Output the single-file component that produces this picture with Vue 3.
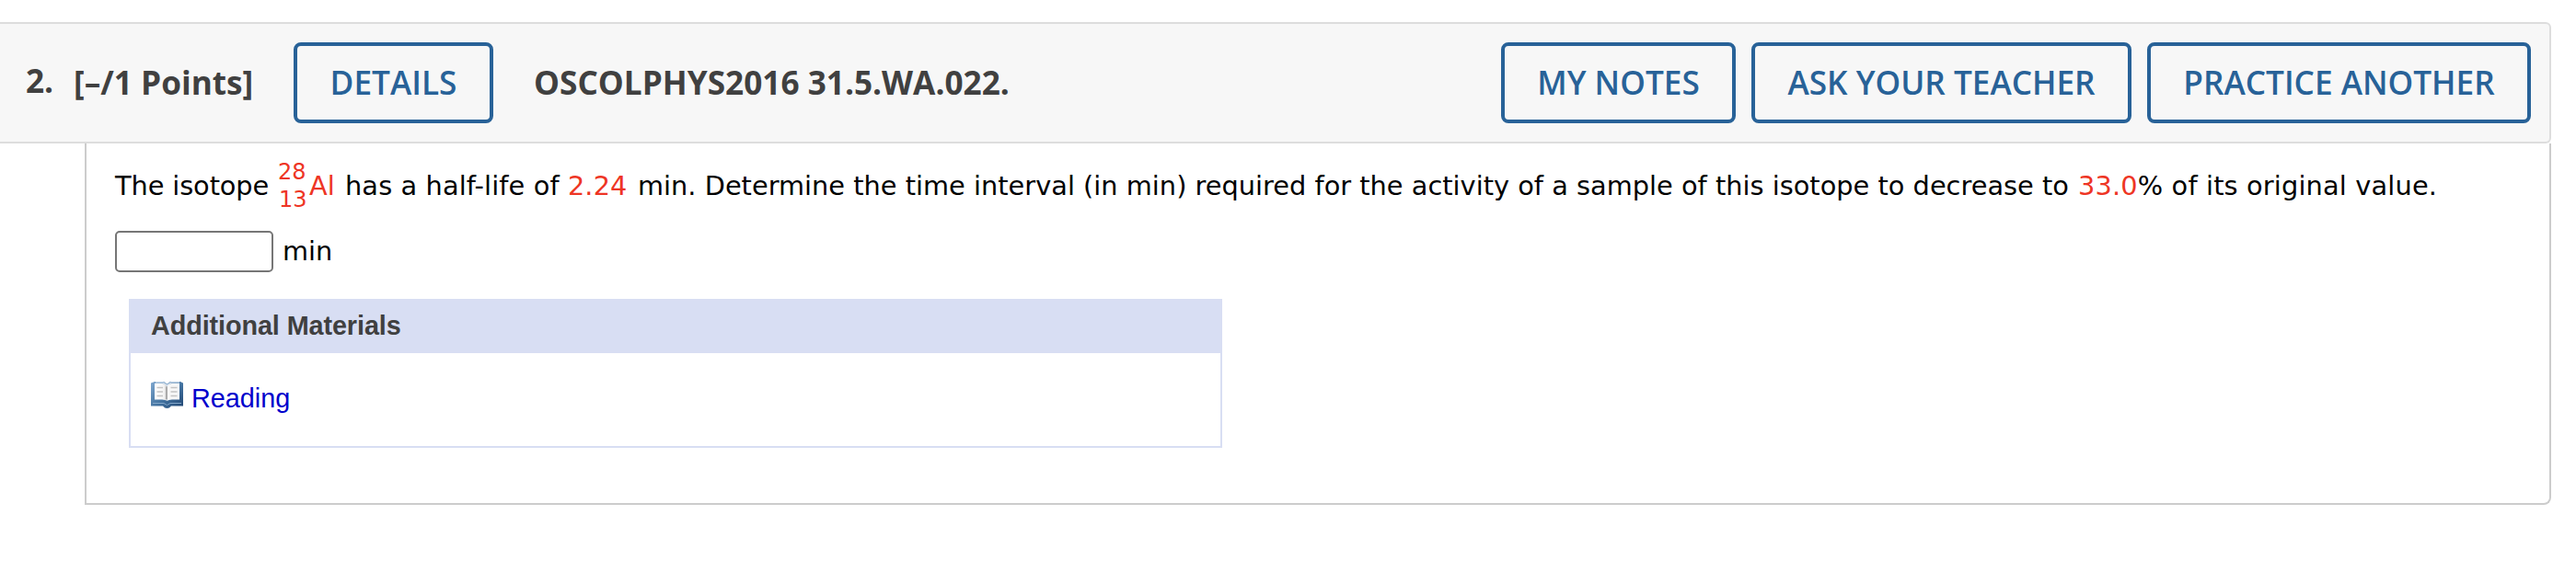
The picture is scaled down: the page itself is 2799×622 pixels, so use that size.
<template>
  <section class="question">
    <header class="question__header">
      <span class="question__number">2.</span>
      <span class="question__points">[–/1 Points]</span>
      <button class="question__button question__button--details">DETAILS</button>
      <span class="question__code">OSCOLPHYS2016 31.5.WA.022.</span>
      <nav class="question__actions">
        <button
          v-for="action in actions"
          :key="action.name"
          class="question__button"
          :class="`question__button--${action.name}`"
        >
          {{ action.label }}
        </button>
      </nav>
    </header>

    <div class="question__body">
      <p class="question__text">
        <span class="question__lead">The isotope</span>
        <span class="isotope">
          <span class="isotope__numbers">
            <span>28</span>
            <span class="isotope__atomic">13</span>
          </span>
          <span class="isotope__symbol">Al</span>
        </span>
        <span class="question__half">has a half-life of <span class="question__value">2.24</span></span>
        <span class="question__middle">min. Determine the time interval (in min) required for the activity of a sample of this isotope to decrease to</span>
        <span class="question__end"><span class="question__value">33.0</span>% of its original value.</span>
      </p>

      <div class="answer">
        <input v-model="answer" class="answer__input" type="text" aria-label="min" />
        <span class="answer__unit">min</span>
      </div>

      <div class="materials">
        <div class="materials__title">Additional Materials</div>
        <div class="materials__content">
          <svg class="materials__icon" viewBox="0 0 35 32" aria-hidden="true">
            <defs>
              <linearGradient id="cover" x1="0" y1="0" x2="1" y2="1">
                <stop offset="0" stop-color="#7fa8cf" />
                <stop offset="0.55" stop-color="#41719f" />
                <stop offset="1" stop-color="#1f4470" />
              </linearGradient>
              <linearGradient id="page" x1="0" y1="0" x2="1" y2="0">
                <stop offset="0" stop-color="#ffffff" />
                <stop offset="0.75" stop-color="#f4f4f4" />
                <stop offset="1" stop-color="#c9c9c9" />
              </linearGradient>
            </defs>
            <path d="M0 3.5 L4 2 H14 L17.5 4.5 L21 2 H32 L35 3.5 V28.5 H22 Q20 31 17.5 31 Q15 31 13 28.5 H0Z" fill="url(#cover)" />
            <path d="M2 25.5 H14 L17.5 27.5 L21 25.5 H33" fill="none" stroke="#82a6c9" stroke-width="1" />
            <path d="M4 4 H12 Q16 4 17.5 6.5 V23 Q16 21.5 12 21.5 H4Z" fill="url(#page)" />
            <path d="M31 4 H23 Q19 4 17.5 6.5 V23 Q19 21.5 23 21.5 H31Z" fill="#f7f7f7" />
            <path d="M5 2.8 H13 L17.5 6 L22 2.8 H31" fill="none" stroke="#d4e2ef" stroke-width="1.2" />
            <path d="M6.5 8.5 H13 M6.5 13 H13 M6.5 17.5 H13 M21.5 8.5 H28.5 M21.5 13 H28.5 M21.5 17.5 H28.5" stroke="#c4c4c4" stroke-width="1.6" />
            <path d="M17 7.5 V21" stroke="#aaaaaa" stroke-width="2" />
          </svg>
          <a class="materials__link" href="#">Reading</a>
        </div>
      </div>
    </div>
  </section>
</template>

<script setup>
import { ref } from "vue";

const answer = ref("");

const actions = [
  { name: "notes", label: "MY NOTES" },
  { name: "ask", label: "ASK YOUR TEACHER" },
  { name: "practice", label: "PRACTICE ANOTHER" },
];
</script>

<style>
body {
  margin: 0;
  background: #fff;
}
</style>

<style scoped>
.question {
  box-sizing: border-box;
  width: 2772px;
  padding-top: 24px;
}

.question__header {
  box-sizing: border-box;
  display: flex;
  align-items: center;
  height: 132px;
  padding: 0 20px 0 28px;
  border: 2px solid #ddd;
  border-left: 0;
  border-radius: 0 6px 6px 0;
  background: #f7f7f7;
  color: #404040;
  font: bold 35.2px/50px "Open Sans", sans-serif;
  white-space: nowrap;
}

.question__number {
  width: 52px;
  padding-bottom: 6px;
}

.question__points {
  width: 239px;
  padding-bottom: 2px;
}

.question__button {
  box-sizing: border-box;
  height: 88px;
  padding: 0 0 2px;
  border: 4px solid #286298;
  border-radius: 8px;
  background: transparent;
  color: #286298;
  font: 600 35.2px/50px "Open Sans", sans-serif;
  white-space: nowrap;
  cursor: pointer;
}

.question__button--details {
  width: 217px;
}

.question__button--notes {
  width: 255px;
}

.question__button--ask {
  width: 413px;
}

.question__button--practice {
  width: 417px;
}

.question__code {
  margin-left: 44px;
  padding-bottom: 2px;
}

.question__actions {
  display: flex;
  gap: 17px;
  margin-left: auto;
}

.question__body {
  box-sizing: border-box;
  height: 393px;
  margin-left: 92px;
  padding: 16px 0 0 31px;
  border: 2px solid #ccc;
  border-top: 0;
  border-radius: 0 0 8px 0;
  color: #000;
  font: 28.8px/34px "DejaVu Sans", sans-serif;
}

.question__text {
  display: flex;
  align-items: center;
  height: 60px;
  margin: 0;
  white-space: nowrap;
}

.question__lead {
  width: 177px;
  letter-spacing: -0.1px;
}

.isotope {
  display: flex;
  align-items: center;
  width: 73px;
  color: #ee3524;
}

.isotope__numbers {
  display: flex;
  flex-direction: column;
  width: 34px;
  font-size: 24px;
  line-height: 30px;
}

.isotope__atomic {
  padding-left: 1px;
}

.question__half {
  width: 318px;
  letter-spacing: 0.12px;
}

.question__middle {
  width: 1565px;
  letter-spacing: 0.015px;
}

.question__end {
  letter-spacing: 0.16px;
}

.question__value {
  color: #ee3524;
}

.answer {
  display: flex;
  align-items: center;
  gap: 10px;
  margin-top: 19px;
}

.answer__input {
  box-sizing: border-box;
  width: 172px;
  height: 45px;
  padding: 2px 6px;
  border: 2px solid #767676;
  border-radius: 5px;
  background: #fff;
  font: inherit;
}

.answer__unit {
  padding-bottom: 1px;
}

.materials {
  box-sizing: border-box;
  width: 1188px;
  height: 162px;
  margin: 29px 0 0 15px;
  border: 2px solid #d8def3;
  font: 28.8px/33px "Liberation Sans", sans-serif;
}

.materials__title {
  box-sizing: border-box;
  height: 57px;
  padding: 11px 22px;
  background: #d8def3;
  color: #404040;
  font-weight: bold;
  letter-spacing: -0.1px;
}

.materials__content {
  display: flex;
  align-items: flex-start;
  gap: 9px;
  padding: 29px 22px;
}

.materials__icon {
  width: 35px;
  height: 32px;
}

.materials__link {
  padding-top: 4px;
  color: #0000cc;
  text-decoration: none;
}
</style>
